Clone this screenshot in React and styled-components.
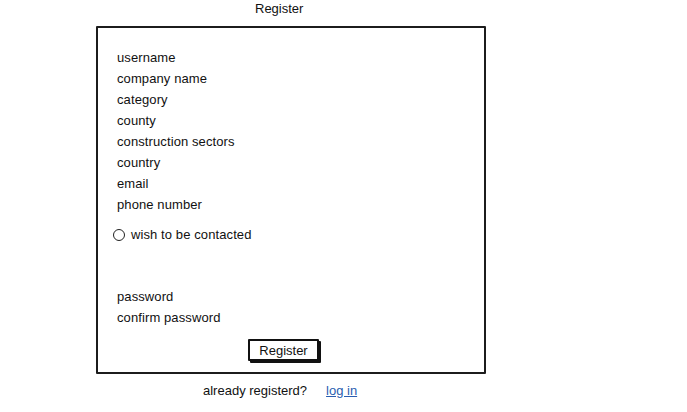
import React from "react";
import styled, { createGlobalStyle } from "styled-components";

const Global = createGlobalStyle`
  html, body { margin: 0; padding: 0; background: #fff; }
  body { font-family: "Liberation Sans", Arial, sans-serif; font-size: 13px; color: #111; }
`;

const Page = styled.div`
  width: 687px;
  height: 412px;
`;

const Title = styled.div`
  margin-left: 255px;
  width: 60px;
  height: 17px;
  line-height: 17px;
`;

const Box = styled.div`
  margin: 9px 0 0 96px;
  width: 390px;
  height: 348px;
  border: 2px solid #1c1c1c;
  border-radius: 1px;
  padding: 19px 0 0 19px;
  display: flex;
  flex-direction: column;
  box-sizing: border-box;
`;

const Field = styled.div`
  height: 21px;
  line-height: 21px;
  letter-spacing: 0.1px;
  margin-top: ${(p) => p.$gap || 0}px;
`;

const CheckRow = styled.div`
  display: flex;
  align-items: center;
  gap: 6px;
  height: 21px;
  margin-top: 9px;
  margin-left: -4px;
  letter-spacing: 0.1px;
`;

const Radio = styled.span`
  width: 10px;
  height: 10px;
  border: 1.2px solid #222;
  border-radius: 50%;
  display: inline-block;
`;

const Button = styled.button`
  align-self: flex-start;
  margin: 11px 0 0 131px;
  height: 22px;
  width: 71px;
  padding: 0;
  font: inherit;
  color: #111;
  background: #fff;
  border: 2px solid #111;
  border-radius: 1px;
  box-shadow: 2px 2px 0 #111;
  cursor: pointer;
`;

const Footer = styled.div`
  display: flex;
  height: 32px;
  align-items: center;
  padding-left: 203px;
  gap: 19px;
`;

const Link = styled.a`
  color: #2a5db0;
  text-decoration: underline;
`;

const fields1 = [
  "username",
  "company name",
  "category",
  "county",
  "construction sectors",
  "country",
  "email",
  "phone number",
];

export default function App() {
  return (
    <Page>
      <Global />
      <Title>Register</Title>
      <Box>
        {fields1.map((f) => (
          <Field key={f}>{f}</Field>
        ))}
        <CheckRow>
          <Radio />
          <span>wish to be contacted</span>
        </CheckRow>
        <Field $gap={41}>password</Field>
        <Field>confirm password</Field>
        <Button>Register</Button>
      </Box>
      <Footer>
        <span>already registerd?</span>
        <Link href="#">log in</Link>
      </Footer>
    </Page>
  );
}
